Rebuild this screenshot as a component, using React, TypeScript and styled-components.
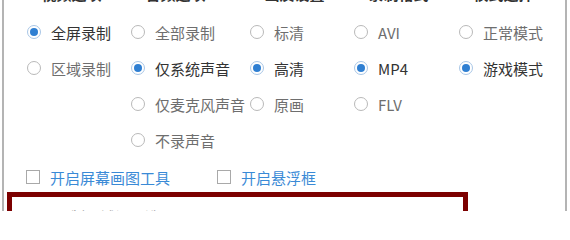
import styled, { createGlobalStyle } from "styled-components";

const GlobalStyle = createGlobalStyle`
  html, body {
    margin: 0;
    padding: 0;
    background: #ffffff;
  }
  body {
    font-family: "Noto Sans CJK SC", "Noto Sans", sans-serif;
  }
`;

// --- Window frame ---

const Window = styled.div`
  margin-left: 2px;
  width: 561px;
  height: 211px;
  border-left: 2px solid #b4b4b4;
  border-right: 2px solid #b4b4b4;
  overflow: hidden;
  background: #fff;
`;

// --- Option groups ---

const OptionsGrid = styled.div`
  display: grid;
  grid-template-columns: 104px 119px 104px 105px 1fr;
  margin-top: -22px;
  padding-left: 23px;
`;

const Group = styled.div`
  display: flex;
  flex-direction: column;
  min-width: 0;
`;

const GroupTitle = styled.div`
  height: 36px;
  display: flex;
  align-items: center;
  margin-left: -4px;
  position: relative;
  top: -3px;
  font-size: 15px;
  font-weight: 700;
  color: #333;
  white-space: nowrap;
`;

const OptionRow = styled.label<{ $checked?: boolean }>`
  height: 36px;
  display: flex;
  align-items: center;
  gap: 10px;
  font-size: 15px;
  color: ${(p) => (p.$checked ? "#333" : "#6e6e6e")};
  white-space: nowrap;
`;

const Radio = styled.span<{ $checked?: boolean }>`
  flex: none;
  width: 14px;
  height: 14px;
  box-sizing: border-box;
  border-radius: 50%;
  border: 1px solid ${(p) => (p.$checked ? "#a8c6e6" : "#b9b9b9")};
  background: #fff;
  display: flex;
  align-items: center;
  justify-content: center;

  &::after {
    content: "";
    display: ${(p) => (p.$checked ? "block" : "none")};
    width: 8px;
    height: 8px;
    border-radius: 50%;
    background: #2f7fd2;
  }
`;

// --- Checkbox row ---

const CheckRow = styled.div`
  height: 30px;
  padding-top: 4px;
  display: flex;
  align-items: center;
  padding-left: 22px;
`;

const CheckItem = styled.label<{ $width?: number }>`
  display: flex;
  align-items: center;
  gap: 10px;
  width: ${(p) => (p.$width ? `${p.$width}px` : "auto")};
  font-size: 15px;
  color: #3a8ad6;
  white-space: nowrap;
`;

const CheckBox = styled.span`
  flex: none;
  width: 14px;
  height: 14px;
  box-sizing: border-box;
  border: 1px solid #a9a9a9;
  background: #fff;
`;

// --- Highlighted panel (red frame) ---

const Highlight = styled.div`
  margin-left: 3px;
  width: 461px;
  height: 40px;
  box-sizing: border-box;
  border: 5px solid #7c0000;
  border-bottom: none;
  padding: 9px 0 0 14px;
  display: flex;
  align-items: flex-start;
  gap: 14px;
  font-size: 15px;
  color: #9a9a9a;
`;

const Dot = styled.span`
  color: #6fb0ea;
`;

const groups = [
  {
    title: "• 视频选项",
    options: [
      { label: "全屏录制", checked: true },
      { label: "区域录制" },
    ],
  },
  {
    title: "• 音频选项",
    options: [
      { label: "全部录制" },
      { label: "仅系统声音", checked: true },
      { label: "仅麦克风声音" },
      { label: "不录声音" },
    ],
  },
  {
    title: "• 画质设置",
    options: [
      { label: "标清" },
      { label: "高清", checked: true },
      { label: "原画" },
    ],
  },
  {
    title: "• 录制格式",
    options: [
      { label: "AVI" },
      { label: "MP4", checked: true },
      { label: "FLV" },
    ],
  },
  {
    title: "• 模式选择",
    options: [
      { label: "正常模式" },
      { label: "游戏模式", checked: true },
    ],
  },
];

export default function App() {
  return (
    <>
      <GlobalStyle />
      <Window>
        <OptionsGrid>
          {groups.map((group) => (
            <Group key={group.title}>
              <GroupTitle>{group.title}</GroupTitle>
              {group.options.map((opt) => (
                <OptionRow key={opt.label} $checked={opt.checked}>
                  <Radio $checked={opt.checked} />
                  {opt.label}
                </OptionRow>
              ))}
            </Group>
          ))}
        </OptionsGrid>

        <CheckRow>
          <CheckItem $width={191}>
            <CheckBox />
            开启屏幕画图工具
          </CheckItem>
          <CheckItem>
            <CheckBox />
            开启悬浮框
          </CheckItem>
        </CheckRow>

        <Highlight>
          <Dot>•</Dot>
          <span>录制区域设置选项</span>
        </Highlight>
      </Window>
    </>
  );
}
